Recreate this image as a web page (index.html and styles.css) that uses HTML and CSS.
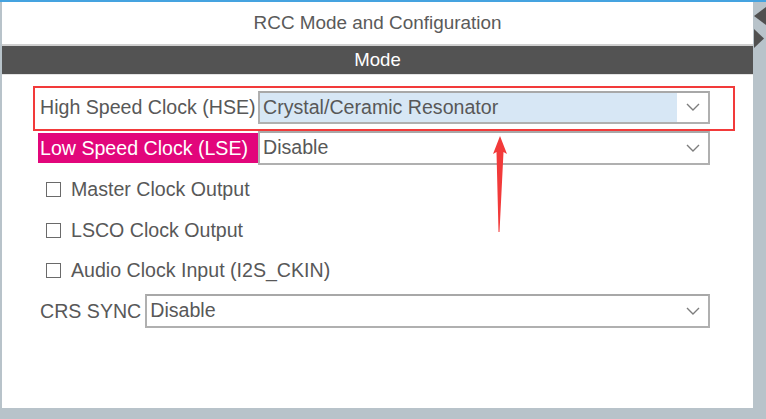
FILE: index.html
```html
<!DOCTYPE html>
<html>
<head>
<meta charset="utf-8">
<link rel="stylesheet" href="styles.css">
</head>
<body>
<div class="frame">
  <div class="panel">
    <div class="title">RCC Mode and Configuration</div>
    <div class="bar">Mode</div>
    <div class="form">
      <div class="row highlight">
        <span class="label wide">High Speed Clock (HSE)</span>
        <div class="select">
          <span class="value selected">Crystal/Ceramic Resonator</span>
          <span class="caret"><svg width="14" height="8" viewBox="0 0 14 8"><polyline points="1,1 7,7 13,1" fill="none" stroke="#7d7d7d" stroke-width="1.4"/></svg></span>
        </div>
      </div>
      <div class="row">
        <span class="label wide pink">Low Speed Clock (LSE)</span>
        <div class="select tall">
          <span class="value">Disable</span>
          <span class="caret"><svg width="14" height="8" viewBox="0 0 14 8"><polyline points="1,1 7,7 13,1" fill="none" stroke="#7d7d7d" stroke-width="1.4"/></svg></span>
        </div>
      </div>
      <div class="checks">
        <label class="check"><span class="box"></span>Master Clock Output</label>
        <label class="check"><span class="box"></span>LSCO Clock Output</label>
        <label class="check"><span class="box"></span>Audio Clock Input (I2S_CKIN)</label>
      </div>
      <div class="row crs">
        <span class="label">CRS SYNC</span>
        <div class="select tall">
          <span class="value">Disable</span>
          <span class="caret"><svg width="14" height="8" viewBox="0 0 14 8"><polyline points="1,1 7,7 13,1" fill="none" stroke="#7d7d7d" stroke-width="1.4"/></svg></span>
        </div>
      </div>
    </div>
  </div>
  <div class="scrollbar">
    <svg width="13" height="48" viewBox="0 0 13 48">
      <polygon points="1,14 13,5 13,23" fill="#505050"/>
      <polygon points="1,27 1,46 11,36.5" fill="#505050"/>
    </svg>
  </div>
  <svg class="pointer" width="20" height="100" viewBox="0 0 20 100">
    <polygon points="10,0 17,18 13.5,16 9.5,96 8.5,96 6.5,16 3,18" fill="#f23a3a"/>
  </svg>
</div>
</body>
</html>
```
FILE: styles.css
```css
html, body {
  margin: 0;
  padding: 0;
}
body {
  background: #b8c3ca;
  font-family: "Liberation Sans", Arial, Helvetica, sans-serif;
  color: #585858;
}
.frame {
  position: relative;
  width: 766px;
  height: 419px;
  box-sizing: border-box;
  border-top: 2px solid #45a3e0;
  padding-left: 2px;
  display: flex;
  align-items: flex-start;
}
.panel {
  width: 751px;
  height: 406px;
  background: #fff;
  display: flex;
  flex-direction: column;
}
.title {
  height: 42px;
  line-height: 42px;
  text-align: center;
  font-size: 18.9px;
  color: #5a5a5a;
  border-bottom: 2px solid #cfcfcf;
}
.bar {
  height: 28px;
  line-height: 28px;
  background: #535353;
  color: #fff;
  text-align: center;
  font-size: 18.6px;
  border-bottom: 1px solid #e4e4e4;
}
.form {
  padding: 15px 43px 0 36px;
  font-size: 19.6px;
}
.row {
  position: relative;
  display: flex;
  align-items: center;
  height: 34px;
  margin-bottom: 7px;
}
.label {
  padding: 0 2px;
  margin-right: 2px;
  white-space: nowrap;
  line-height: 30px;
}
.label.wide {
  box-sizing: border-box;
  min-width: 220px;
  margin-right: 0;
}
.pink {
  background: #e2067b;
  color: #fff;
}
.select {
  flex: 1;
  display: flex;
  height: 33px;
  box-sizing: border-box;
  border: 2px solid #b0b0b0;
  border-top-color: #a8a8a8;
  background: #fff;
}
.select.tall {
  height: 34px;
}
.value {
  flex: 1;
  padding-left: 3px;
  line-height: 29px;
  white-space: nowrap;
}
.value.selected {
  background: #d7e7f5;
}
.caret {
  width: 31px;
  display: flex;
  align-items: center;
  justify-content: center;
}
.highlight::after {
  content: "";
  position: absolute;
  left: -5px;
  right: -25px;
  top: -4px;
  bottom: -7px;
  border: 2px solid #f23a3a;
  pointer-events: none;
}
.checks {
  display: flex;
  flex-direction: column;
  margin-top: -4px;
  padding-left: 8px;
}
.check {
  display: flex;
  align-items: center;
  height: 42px;
  white-space: nowrap;
}
.check:nth-child(2) {
  height: 41px;
}
.check:nth-child(3) {
  height: 38px;
}
.box {
  width: 13px;
  height: 13px;
  border: 1.5px solid #6a6a6a;
  margin-right: 10px;
  background: #fff;
}
.crs {
  margin-top: 5px;
}
.scrollbar {
  width: 13px;
}
.scrollbar svg {
  display: block;
}
.pointer {
  position: absolute;
  left: 490px;
  top: 134px;
}
```
